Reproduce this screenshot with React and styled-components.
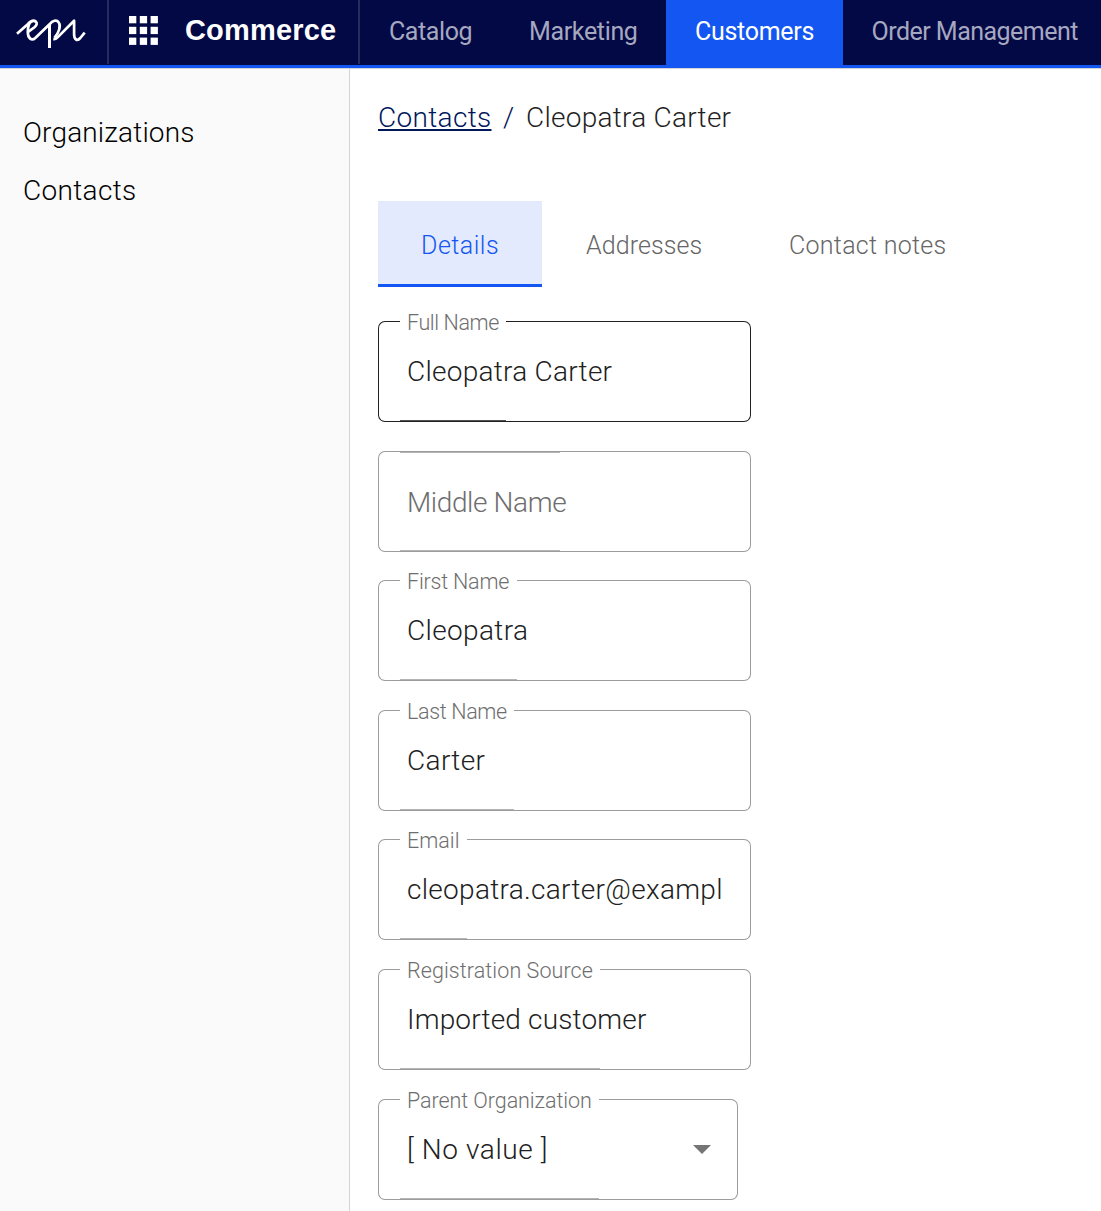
import React from "react";
import styled, { createGlobalStyle, css } from "styled-components";

const GlobalStyle = createGlobalStyle`
  * { box-sizing: border-box; }
  body {
    margin: 0;
    background: #fff;
    font-family: Roboto, "Liberation Sans", sans-serif;
    font-weight: 300;
  }
`;

const Page = styled.div`
  height: 1211px;
  display: flex;
  flex-direction: column;
  overflow: hidden;
`;

const Header = styled.header`
  height: 69px;
  flex: none;
  display: flex;
  background: #030945;
  border-bottom: 1px solid #d4d4d8;
  box-shadow: inset 0 -3px 0 #1456f1;
`;

const LogoCell = styled.div`
  width: 109px;
  height: 64px;
  border-right: 2px solid #262b60;
`;

const ProductCell = styled.div`
  width: 251px;
  height: 64px;
  display: flex;
  align-items: center;
  gap: 27px;
  padding: 0 0 4px 20px;
  border-right: 2px solid #262b60;
`;

const ProductName = styled.span`
  color: #fff;
  font: 700 29px/36px "Liberation Sans", Arial, sans-serif;
  letter-spacing: 0.18px;
`;

const Nav = styled.nav`
  display: flex;
`;

const NavItem = styled.a`
  width: ${(p) => p.$width}px;
  height: 68px;
  padding-left: ${(p) => p.$pad ?? 29}px;
  font-size: 25px;
  font-weight: 400;
  line-height: 63px;
  white-space: nowrap;
  letter-spacing: ${(p) => p.$spacing}px;
  color: ${(p) => (p.$active ? "#fff" : "#a6a8c0")};
  background: ${(p) => (p.$active ? "#1456f1" : "transparent")};
`;

const Body = styled.div`
  flex: 1;
  display: flex;
  min-height: 0;
`;

const Sidebar = styled.aside`
  width: 350px;
  flex: none;
  padding: 35px 0 0 23px;
  background: #fafafa;
  border-right: 1px solid #d3d3d3;
`;

const SideLink = styled.div`
  font-size: 28px;
  line-height: 58px;
  letter-spacing: ${(p) => p.$spacing}px;
  color: #000;
`;

const Content = styled.main`
  flex: 1;
  padding: 34px 0 0 28px;
`;

const Breadcrumb = styled.div`
  display: flex;
  height: 98px;
  font-size: 28px;
  line-height: 30px;
  letter-spacing: 0.26px;
  color: #1f1f1f;
`;

const CrumbLink = styled.a`
  height: 30px;
  width: 114px;
  letter-spacing: 0.32px;
  color: #00175c;
  text-decoration: underline;
  text-decoration-thickness: 2px;
  text-underline-offset: 2px;
  text-decoration-skip-ink: none;
`;

const CrumbSeparator = styled.span`
  width: 34px;
  padding-left: 11px;
  color: #00175c;
`;

const TabBar = styled.div`
  display: flex;
  height: 86px;
`;

const Tab = styled.div`
  width: ${(p) => p.$width}px;
  padding: 3px 0 0 ${(p) => p.$pad}px;
  font-size: 25px;
  line-height: 83px;
  white-space: nowrap;
  letter-spacing: ${(p) => p.$spacing}px;
  color: ${(p) => (p.$active ? "#1456f1" : "#666")};
  ${(p) =>
    p.$active &&
    css`
      background: #e3eafd;
      box-shadow: inset 0 -3px 0 #1456f1;
    `}
`;

const Form = styled.div`
  display: flex;
  flex-direction: column;
  gap: 28.6px;
  padding-top: 34px;
`;

const FieldBox = styled.div`
  position: relative;
  width: ${(p) => p.$width}px;
  height: 101px;
  display: flex;
  justify-content: space-between;
  padding: 0 27px 0 29px;
  --line: ${(p) => (p.$focused ? "#212121" : "#9c9c9c")};
  --soft-line: ${(p) => (p.$focused ? "#505050" : "#b4b4b4")};
`;

const Value = styled.div`
  font-size: 28px;
  line-height: 101px;
  white-space: nowrap;
  letter-spacing: ${(p) => p.$spacing}px;
  color: #212121;
`;

const Caret = styled.span`
  width: 0;
  height: 0;
  margin-top: 46px;
  border: 9px solid transparent;
  border-top-color: #757575;
  border-bottom: 0;
`;

const Outline = styled.div`
  position: absolute;
  inset: 0;
  display: flex;
  pointer-events: none;
`;

const Leading = styled.div`
  width: 22px;
  border: 1px solid var(--line);
  border-right: 0;
  border-radius: 7px 0 0 7px;
`;

const Trailing = styled.div`
  flex: 1;
  border: 1px solid var(--line);
  border-left: 0;
  border-radius: 0 7px 7px 0;
`;

const Notch = styled.div`
  width: ${(p) => p.$width}px;
  border-bottom: 1px solid var(--line);
  border-top: 1px solid ${(p) => (p.$closed ? "var(--line)" : "transparent")};
  box-shadow: inset 0 -1px 0 var(--soft-line)
    ${(p) => (p.$closed ? ", inset 0 1px 0 var(--soft-line)" : "")};
`;

const Label = styled.label`
  position: absolute;
  left: 29px;
  white-space: nowrap;
  letter-spacing: ${(p) => p.$spacing}px;
  color: #6e6e6e;
  ${(p) =>
    p.$resting
      ? css`
          top: 36px;
          font-size: 28px;
          line-height: 31px;
        `
      : css`
          top: -11px;
          font-size: 21.5px;
          line-height: 25px;
        `}
`;

const navItems = [
  { text: "Catalog", width: 141, spacing: -0.41 },
  { text: "Marketing", width: 165, pad: 28, spacing: -0.35 },
  { text: "Customers", width: 177, spacing: -0.29, active: true },
  { text: "Order Management", width: 258, pad: 28.5, spacing: -0.52 },
];

const fields = [
  { label: "Full Name", labelSpacing: -0.4, notch: 106, value: "Cleopatra Carter", spacing: 0.26, focused: true },
  { label: "Middle Name", labelSpacing: -0.38, notch: 160 },
  { label: "First Name", labelSpacing: -0.2, notch: 117, value: "Cleopatra", spacing: 0.36 },
  { label: "Last Name", labelSpacing: -0.34, notch: 114, value: "Carter", spacing: 0.34 },
  { label: "Email", labelSpacing: 0, notch: 67, value: "cleopatra.carter@exampl", spacing: 0.3 },
  { label: "Registration Source", labelSpacing: 0.08, notch: 200, value: "Imported customer", spacing: 0.17 },
  { label: "Parent Organization", labelSpacing: -0.07, notch: 199, value: "[ No value ]", spacing: 0.6, select: true },
];

function Logo() {
  return (
    <svg width="107" height="64" viewBox="0 0 107 64" fill="none" stroke="#fff" strokeWidth="2.7" strokeLinecap="butt" strokeLinejoin="round">
      <path d="M17 33.8 28 24C31 20.8 34 20.2 35.8 21.6C37.6 23.2 36.6 25.6 34.5 27.2L28.5 31.6" />
      <path d="M31 21.4C28.6 23.6 27.8 27.5 27.8 32C27.8 38.3 31.6 41.4 35.3 38L49.5 24.3C52.6 20.6 56.6 19.4 58.6 22.2C61.2 25.6 59.2 32.4 54.4 37.8" />
      <path d="M49.5 25V48" strokeWidth="3" />
      <path d="M53.3 39.2C55.2 39.4 56.6 38.4 57.8 37.1L74.1 20.8V34.2C74.1 39.8 77.3 41.4 80.3 38L84.7 32.6" />
    </svg>
  );
}

function AppsIcon() {
  const steps = [0, 10.8, 21.6];
  return (
    <svg width="29" height="29" viewBox="0 0 29 29" fill="#fff">
      {steps.map((y) => steps.map((x) => <rect key={`${x}-${y}`} x={x} y={y} width="7.3" height="7.3" />))}
    </svg>
  );
}

function Field({ field }) {
  const resting = !field.value;
  return (
    <FieldBox $width={field.select ? 360 : 373} $focused={field.focused}>
      {field.value && <Value $spacing={field.spacing}>{field.value}</Value>}
      {field.select && <Caret />}
      <Outline>
        <Leading />
        <Notch $width={field.notch} $closed={resting} />
        <Trailing />
      </Outline>
      <Label $resting={resting} $spacing={field.labelSpacing}>{field.label}</Label>
    </FieldBox>
  );
}

export default function App() {
  return (
    <Page>
      <GlobalStyle />
      <Header>
        <LogoCell><Logo /></LogoCell>
        <ProductCell>
          <AppsIcon />
          <ProductName>Commerce</ProductName>
        </ProductCell>
        <Nav>
          {navItems.map((n) => (
            <NavItem key={n.text} $width={n.width} $pad={n.pad} $spacing={n.spacing} $active={n.active}>{n.text}</NavItem>
          ))}
        </Nav>
      </Header>
      <Body>
        <Sidebar>
          <SideLink $spacing={0.15}>Organizations</SideLink>
          <SideLink $spacing={0.32}>Contacts</SideLink>
        </Sidebar>
        <Content>
          <Breadcrumb>
            <CrumbLink>Contacts</CrumbLink>
            <CrumbSeparator>/</CrumbSeparator>
            <span>Cleopatra Carter</span>
          </Breadcrumb>
          <TabBar>
            <Tab $active $width={164} $pad={43} $spacing={0.5}>Details</Tab>
            <Tab $width={203} $pad={44} $spacing={0.09}>Addresses</Tab>
            <Tab $width={244} $pad={44} $spacing={0.28}>Contact notes</Tab>
          </TabBar>
          <Form>
            {fields.map((f) => <Field key={f.label} field={f} />)}
          </Form>
        </Content>
      </Body>
    </Page>
  );
}
